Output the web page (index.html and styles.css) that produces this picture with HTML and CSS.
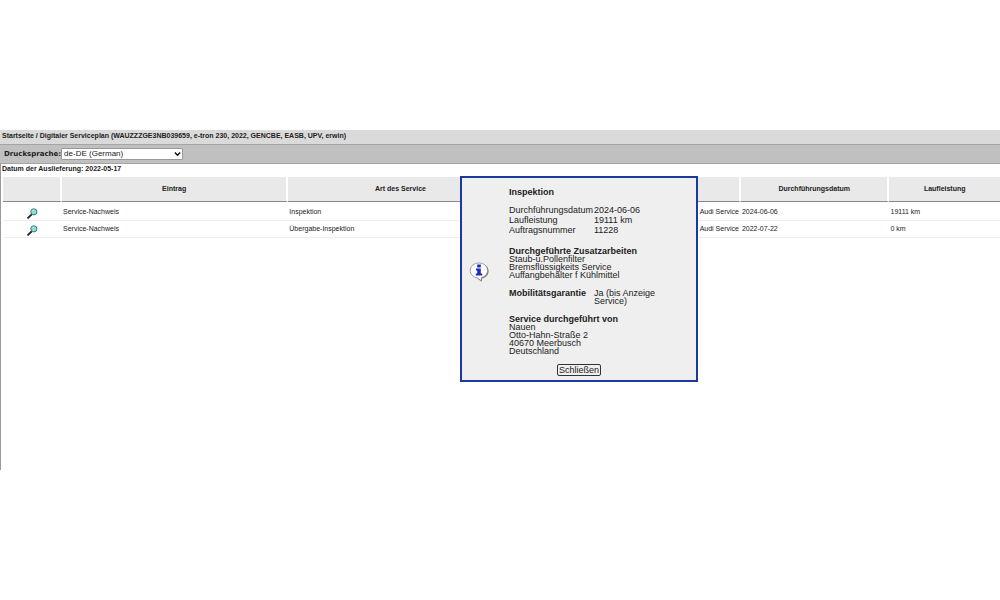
FILE: index.html
```
<!DOCTYPE html>
<html lang="de">
<head>
    <meta charset="UTF-8">
    <meta name="viewport" content="width=device-width, initial-scale=1.0">
    <title>Digitaler Serviceplan</title>
    <link rel="stylesheet" href="styles.css">
</head>
<body>
    <svg class="symbols" aria-hidden="true">
        <symbol id="lupe" viewBox="0 0 20 20">
            <path d="M9 11 L2 18" stroke="#222" stroke-width="3.4" stroke-linecap="round"/>
            <circle cx="12.5" cy="7" r="5.6" fill="#8fd8d4" stroke="#2f7f7c" stroke-width="1.8"/>
            <path d="M10 6 Q11 4 13 4" fill="none" stroke="#e8ffff" stroke-width="1.6"/>
        </symbol>
    </svg>

    <div class="app">
        <div class="pfad">Startseite / Digitaler Serviceplan (WAUZZZGE3NB039659, e-tron 230, 2022, GENCBE, EASB, UPV, erwin)</div>

        <div class="leiste">
            <label for="drucksprache">Drucksprache:</label>
            <div class="auswahl">
                <select id="drucksprache">
                    <option>de-DE (German)</option>
                </select>
                <svg class="pfeil" viewBox="0 0 8 6"><path d="M1 1.2 L4 4.4 L7 1.2" fill="none" stroke="#111" stroke-width="1.7"/></svg>
            </div>
        </div>

        <div class="inhalt">
            <p class="auslieferung">Datum der Auslieferung: 2022-05-17</p>

            <table class="liste">
                <colgroup>
                    <col class="c-icon">
                    <col class="c-breit">
                    <col class="c-breit">
                    <col class="c-breit">
                    <col class="c-datum">
                    <col class="c-km">
                </colgroup>
                <thead>
                    <tr>
                        <th></th>
                        <th>Eintrag</th>
                        <th>Art des Service</th>
                        <th></th>
                        <th>Durchführungsdatum</th>
                        <th>Laufleistung</th>
                    </tr>
                </thead>
                <tbody>
                    <tr>
                        <td class="icon"><a href="#" aria-label="Details"><svg class="lupe"><use href="#lupe"/></svg></a></td>
                        <td>Service-Nachweis</td>
                        <td>Inspektion</td>
                        <td class="partner">Audi Service</td>
                        <td>2024-06-06</td>
                        <td>19111 km</td>
                    </tr>
                    <tr>
                        <td class="icon"><a href="#" aria-label="Details"><svg class="lupe"><use href="#lupe"/></svg></a></td>
                        <td>Service-Nachweis</td>
                        <td>Übergabe-Inspektion</td>
                        <td class="partner">Audi Service</td>
                        <td>2022-07-22</td>
                        <td>0 km</td>
                    </tr>
                </tbody>
            </table>
        </div>

        <div class="dialog" role="dialog" aria-labelledby="dialog-titel">
            <div class="dialog-inhalt">
                <svg class="info" viewBox="0 0 20 20">
                    <path d="M11 1.8 C16 1.8 19.6 4.8 19.6 9 C19.6 13 16.8 15.8 13.2 16.4 L12.6 19.8 L8.6 16.8 Z" fill="#777"/>
                    <path d="M10 1 C15 1 18.5 4.2 18.5 8.4 C18.5 12.2 15.8 14.8 12.4 15.5 L12 18.8 L8.2 15.7 C4.2 15.2 1.2 12.4 1.2 8.4 C1.2 4.2 5 1 10 1 Z" fill="#fff" stroke="#888" stroke-width="0.8"/>
                    <path d="M8.2 2.6 H11.8 V5.4 H8.2 Z M7 6.4 H11.8 V11.6 H13.2 V13.6 H6.8 V11.6 H8.2 V8.4 H7 Z" fill="#1a2fc0"/>
                </svg>
                <div class="dialog-text">
                    <h2 id="dialog-titel">Inspektion</h2>
                    <dl class="daten">
                        <dt>Durchführungsdatum</dt><dd>2024-06-06</dd>
                        <dt>Laufleistung</dt><dd>19111 km</dd>
                        <dt>Auftragsnummer</dt><dd>11228</dd>
                    </dl>
                    <h3>Durchgeführte Zusatzarbeiten</h3>
                    <p>Staub-u.Pollenfilter<br>Bremsflüssigkeits Service<br>Auffangbehälter f Kühlmittel</p>
                    <dl class="garantie">
                        <dt>Mobilitätsgarantie</dt><dd>Ja (bis Anzeige Service)</dd>
                    </dl>
                    <h3>Service durchgeführt von</h3>
                    <p>Nauen<br>Otto-Hahn-Straße 2<br>40670 Meerbusch<br>Deutschland</p>
                </div>
            </div>
            <button type="button">Schließen</button>
        </div>
    </div>
</body>
</html>
```
FILE: styles.css
```
* {
    box-sizing: border-box;
}

body {
    margin: 130px 0 0;
    background-color: #fff;
    color: #222;
    font-family: "Liberation Sans", Arial, sans-serif;
    font-size: 7px;
    line-height: 8px;
}

.symbols {
    display: none;
}

.app {
    position: relative;
}

.pfad {
    padding: 2px 2px 4px;
    background-color: #dadada;
    font-weight: bold;
}

/* Leiste mit der Sprachauswahl */
.leiste {
    display: flex;
    align-items: center;
    height: 20px;
    padding-left: 4px;
    background-color: #c0c0c0;
    border-top: 1px solid #a4a4a4;
    border-bottom: 1px solid #a4a4a4;
}

.leiste label {
    font-family: "DejaVu Sans", Verdana, sans-serif;
    font-weight: bold;
}

.auswahl {
    position: relative;
}

.auswahl select {
    display: block;
    width: 122px;
    height: 12px;
    padding: 0 2px;
    appearance: none;
    background-color: #fff;
    border: 1px solid #999;
    border-radius: 1px;
    color: #222;
    font-family: inherit;
    font-size: 8px;
    line-height: 10px;
}

.pfeil {
    position: absolute;
    top: 3px;
    right: 2px;
    width: 7px;
    height: 6px;
    pointer-events: none;
}

.inhalt {
    min-height: 306px;
    border-left: 1px solid #999;
}

.auslieferung {
    margin: 0;
    padding: 1px 1px 4px;
    font-weight: bold;
}

/* Tabelle der Einträge */
.liste {
    width: 100%;
    table-layout: fixed;
    border-collapse: separate;
    border-spacing: 0;
    border-left: 2px solid #fff;
}

.c-icon {
    width: 59px;
}

.c-breit {
    width: 22.7%;
}

.c-datum {
    width: 14.9%;
}

.liste th {
    height: 25px;
    padding: 0;
    background-color: #e9e9e9;
    background-clip: padding-box;
    border-right: 2px solid #fff;
    border-bottom: 1px solid #888;
}

.liste th:last-child {
    border-right: 0;
}

.liste td {
    height: 17px;
    padding: 0 1px;
    border-bottom: 1px solid #eee;
}

.liste tbody tr:first-child td {
    height: 19px;
    padding-top: 2px;
}

.liste .icon {
    text-align: center;
}

.liste .partner {
    padding-right: 2px;
    text-align: right;
}

.lupe {
    display: block;
    width: 11px;
    height: 11px;
    margin: 2px auto 0;
}

/* Hinweisfenster */
.dialog {
    position: absolute;
    top: 46px;
    left: 46%;
    width: 238px;
    padding: 10px 7px 4px;
    background-color: #efefef;
    border: 2px solid #1c3a9c;
    font-size: 9px;
    text-align: center;
}

.dialog-inhalt {
    display: flex;
    align-items: center;
    gap: 20px;
    text-align: left;
}

.info {
    width: 20px;
    height: 20px;
}

.dialog h2,
.dialog h3,
.dialog p,
.dialog dl,
.dialog dd {
    margin: 0;
    font-size: inherit;
}

.dialog dl {
    display: grid;
    grid-template-columns: 84px 70px;
    column-gap: 1px;
}

.dialog .daten {
    margin: 9px 0 12px;
    line-height: 10px;
}

.dialog .garantie {
    margin: 10px 0;
}

.garantie dt {
    font-weight: bold;
}

.dialog button {
    height: 12px;
    margin-top: 9px;
    padding: 0 1px;
    background-color: #efefef;
    border: 1px solid #333;
    border-radius: 2px;
    color: #222;
    font-family: inherit;
    font-size: 9px;
    line-height: 9px;
}
```
